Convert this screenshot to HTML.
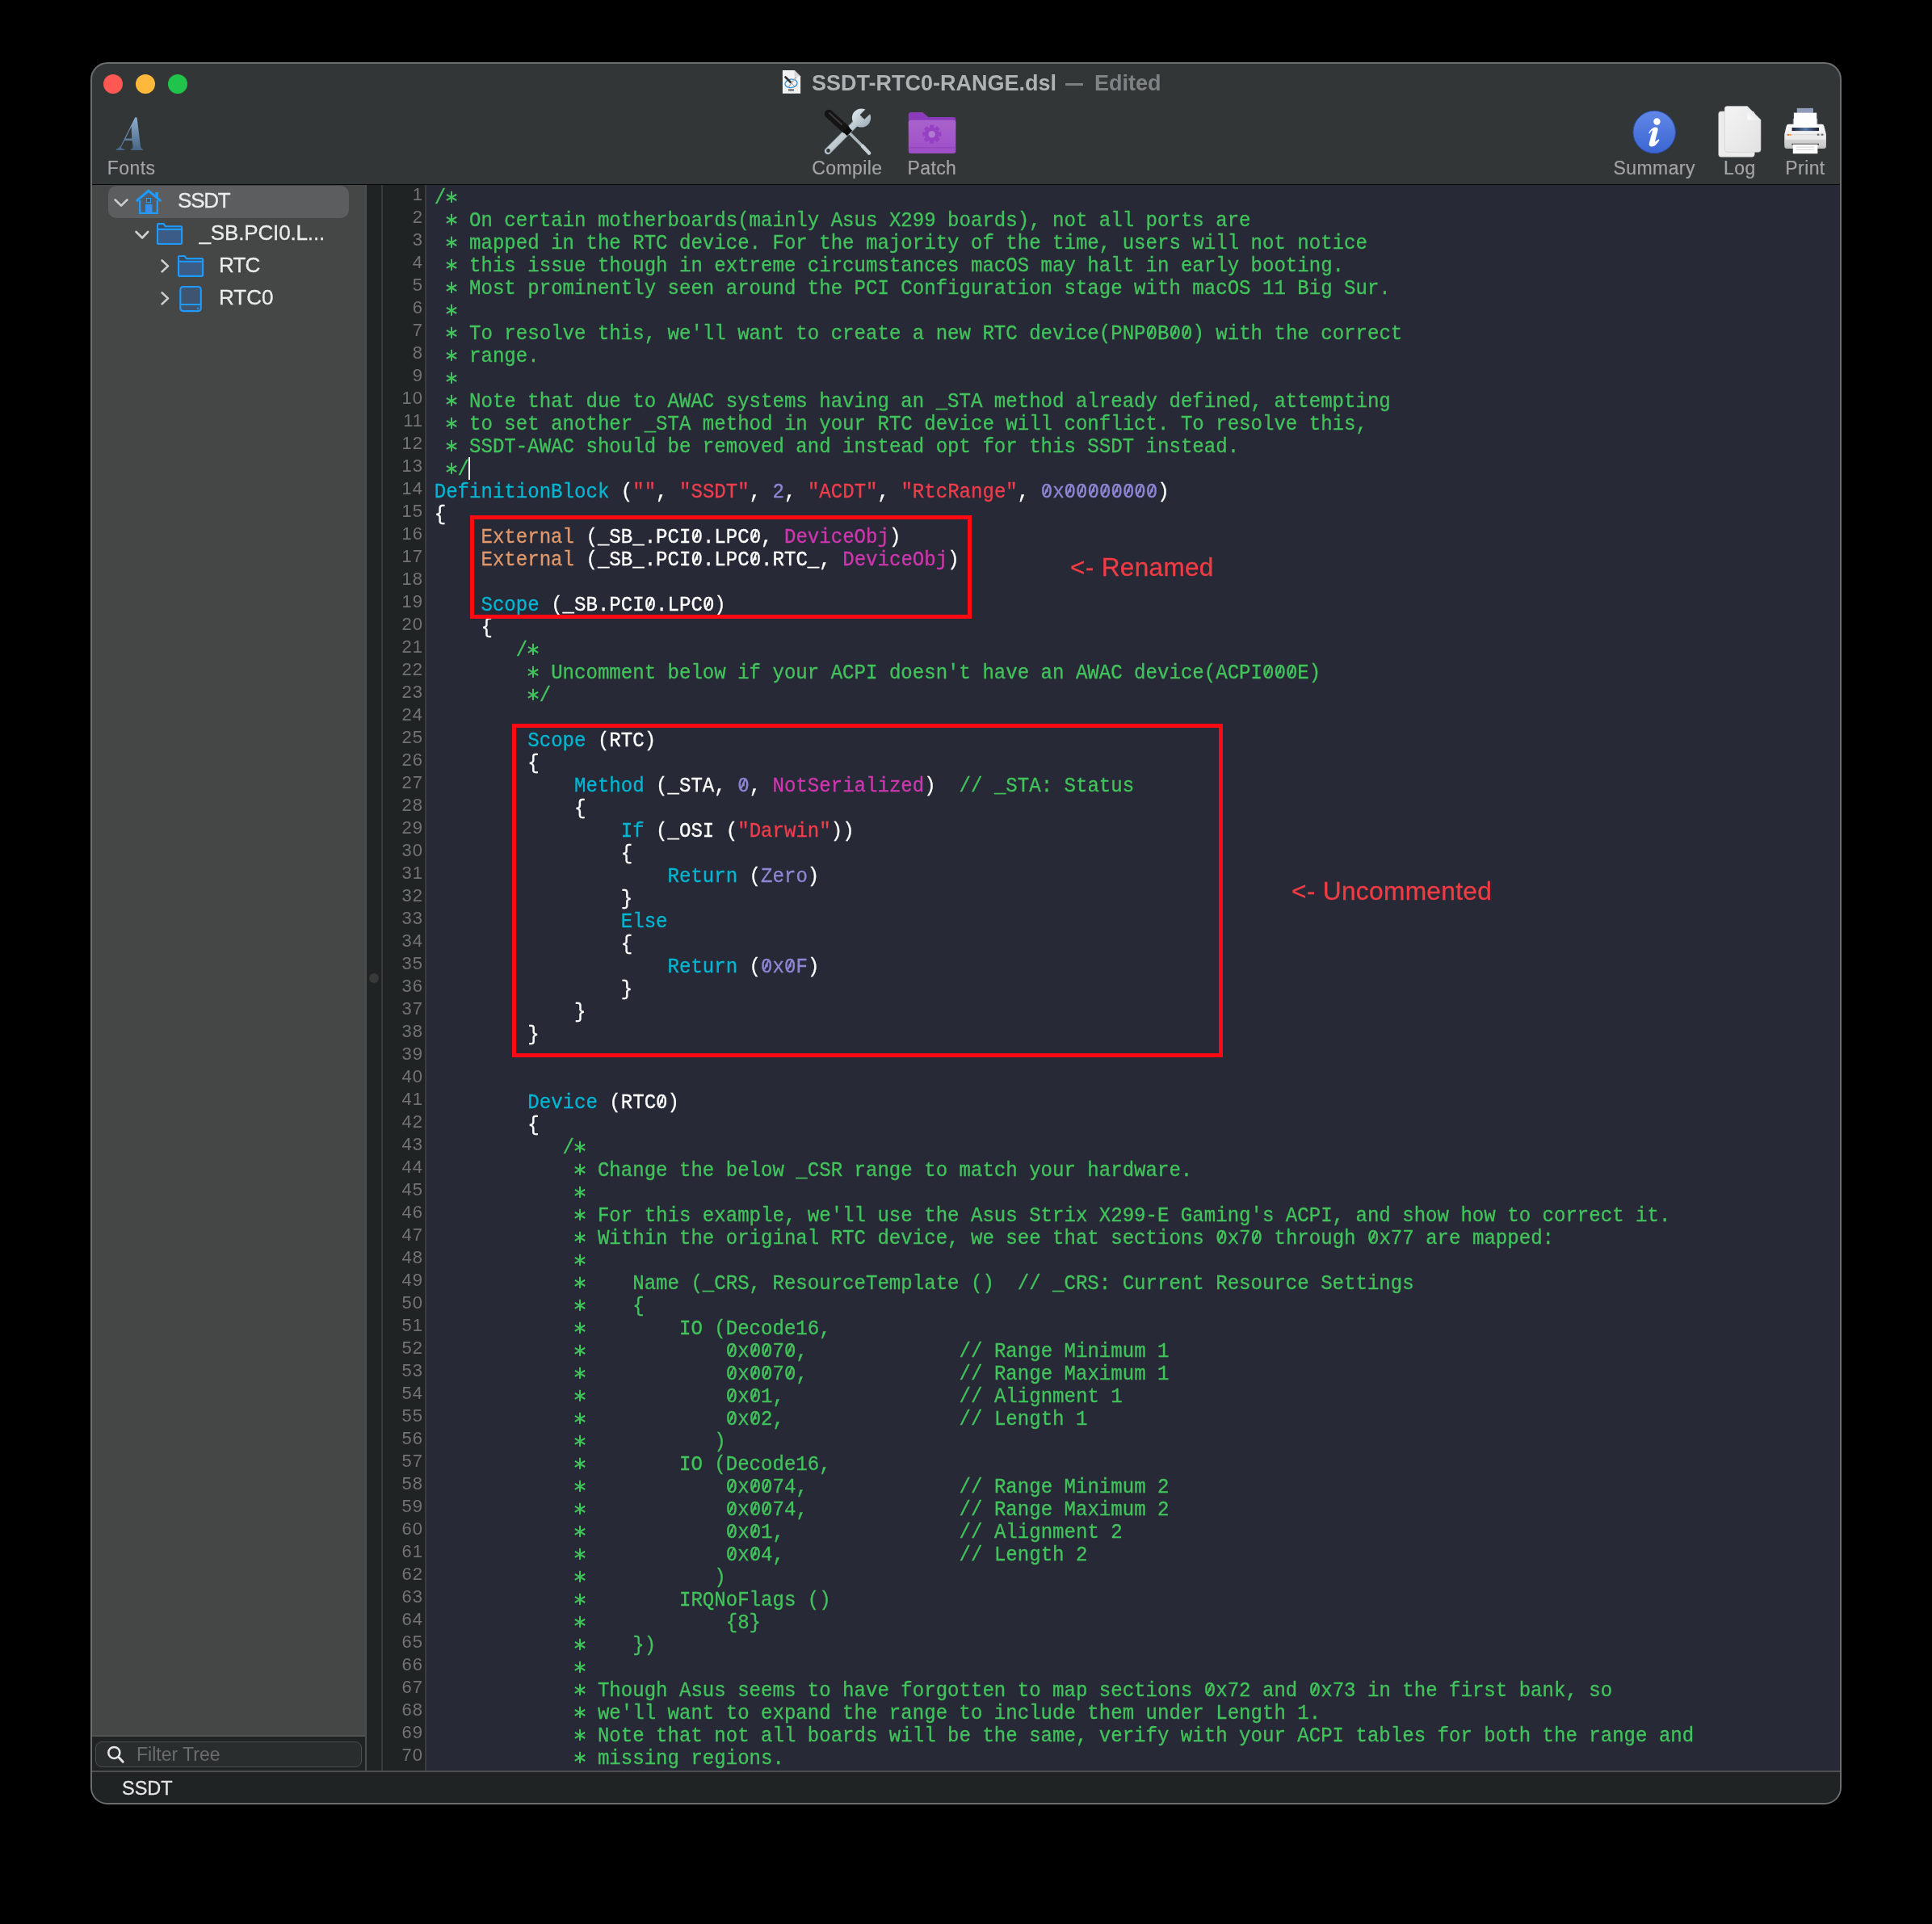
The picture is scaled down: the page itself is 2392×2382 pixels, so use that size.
<!DOCTYPE html>
<html><head><meta charset="utf-8"><title>MaciASL</title><style>
html,body{margin:0;padding:0;background:#000;width:2392px;height:2382px;overflow:hidden;position:relative}
*{box-sizing:border-box}
.a{position:absolute}
#win{position:absolute;left:112px;top:77px;width:2168px;height:2157px;border:2px solid #6c6e6e;border-radius:21px;background:#333637;overflow:hidden}
#c{position:absolute;left:-114px;top:-79px;width:2392px;height:2382px}
.sans{font-family:"Liberation Sans",sans-serif}
#code{position:absolute;left:537.73px;top:0;font-family:"Liberation Mono",monospace;font-size:24.072px;line-height:28px;color:#fff;white-space:pre}
#code .ln{height:28px;transform-origin:0 20px;transform:scaleY(1.085);-webkit-text-stroke:0.3px currentColor}
.c{color:#42c35c}.k{color:#00b6d2}.s{color:#f03d4c}.n{color:#8f86d6}.e{color:#e2986a}.m{color:#cf36b0}
#nums{position:absolute;left:474px;width:50px;text-align:right;font-family:"Liberation Sans",sans-serif;font-size:22px;letter-spacing:1px;line-height:28px;color:#727474}
#nums div{height:28px}
.tl{font-family:"Liberation Sans",sans-serif;font-size:23px;-webkit-text-stroke:0.2px currentColor;letter-spacing:0.4px;width:200px;text-align:center;color:#a2a4a5;white-space:nowrap;line-height:1}
.sb{font-family:"Liberation Sans",sans-serif;font-size:26px;-webkit-text-stroke:0.3px currentColor;color:#ececec;white-space:nowrap;line-height:1}

.ast{display:inline-block;width:14.4457px;height:28px;position:relative;vertical-align:top;font-style:normal;background:linear-gradient(currentColor,currentColor) no-repeat 6.22px 6.27px/2.1px 13.36px}
.ast::before,.ast::after{content:"";position:absolute;left:6.22px;top:6.0px;width:2.1px;height:13.9px;background:currentColor}
.ast::before{transform:rotate(62deg)}
.ast::after{transform:rotate(-62deg)}

/* grayscale-aa */ #c{will-change:transform}

.z{font-style:normal;position:relative}
.z::after{content:"";position:absolute;left:5.85px;top:5.75px;width:2.3px;height:10.9px;background:currentColor;transform:rotate(25.5deg)}

</style></head><body>
<div id="win"><div id="c">
<!-- toolbar black line -->
<div class="a" style="left:114px;top:228px;width:2164px;height:1.4px;background:#050606"></div>
<!-- traffic lights -->
<div class="a" style="left:128px;top:92px;width:24px;height:24px;border-radius:50%;background:#ff5752"></div>
<div class="a" style="left:168px;top:92px;width:24px;height:24px;border-radius:50%;background:#feb83c"></div>
<div class="a" style="left:208px;top:92px;width:24px;height:24px;border-radius:50%;background:#20c44a"></div>
<!-- title -->
<div class="a sans" style="left:1005px;top:87px;font-weight:bold;font-size:27px;color:#b0b3b4;white-space:nowrap;line-height:32px">SSDT-RTC0-RANGE.dsl</div>
<div class="a" style="left:1319px;top:102.6px;width:22px;height:3.5px;background:#7c8081"></div>
<div class="a sans" style="left:1355px;top:87px;font-weight:bold;font-size:27px;color:#808384;white-space:nowrap;line-height:32px">Edited</div>
<!-- sidebar -->
<div class="a" style="left:114px;top:229.3px;width:340px;height:1920px;background:#454646"></div>
<div class="a" style="left:452px;top:229.3px;width:2px;height:1963px;background:#4c4d4d"></div>
<div class="a" style="left:114px;top:2148px;width:338px;height:2px;background:#525353"></div>
<div class="a" style="left:114px;top:2150px;width:338px;height:42px;background:#202324"></div>
<div class="a" style="left:118px;top:2156px;width:330px;height:32px;border-radius:8px;background:#2a2d2e;border:1px solid #4a4c4d"></div>
<div class="a sans" style="left:169px;top:2160px;font-size:23px;color:#6a6c6d;line-height:24px">Filter Tree</div>
<div class="a" style="left:134px;top:230px;width:298px;height:40px;border-radius:10px;background:#5c5d5f"></div>
<div class="a sb" style="left:220px;top:235px;letter-spacing:-1.2px">SSDT</div>
<div class="a sb" style="left:246.5px;top:275px;letter-spacing:-0.15px">_SB.PCI0.L...</div>
<div class="a sb" style="left:271px;top:314.5px;letter-spacing:-0.8px">RTC</div>
<div class="a sb" style="left:271px;top:355px">RTC0</div>
<!-- divider -->
<div class="a" style="left:454px;top:229.3px;width:18px;height:1963px;background:#202324"></div>
<div class="a" style="left:457px;top:1205px;width:12px;height:12px;border-radius:50%;background:#383939"></div>
<div class="a" style="left:472px;top:229.3px;width:2px;height:1963px;background:#383a3a"></div>
<!-- gutter -->
<div class="a" style="left:474px;top:229.3px;width:52px;height:1963px;background:#202324"></div>
<div class="a" style="left:526px;top:229.3px;width:2px;height:1963px;background:#3b3d3e"></div>
<!-- editor -->
<div class="a" style="left:528px;top:229.3px;width:1750px;height:1963px;background:#272a36"></div>
<div class="a" style="left:0;top:229.3px;width:2392px;height:1962.7px;overflow:hidden">
  <div id="nums" style="top:-2.6px"><div>1</div>
<div>2</div>
<div>3</div>
<div>4</div>
<div>5</div>
<div>6</div>
<div>7</div>
<div>8</div>
<div>9</div>
<div>10</div>
<div>11</div>
<div>12</div>
<div>13</div>
<div>14</div>
<div>15</div>
<div>16</div>
<div>17</div>
<div>18</div>
<div>19</div>
<div>20</div>
<div>21</div>
<div>22</div>
<div>23</div>
<div>24</div>
<div>25</div>
<div>26</div>
<div>27</div>
<div>28</div>
<div>29</div>
<div>30</div>
<div>31</div>
<div>32</div>
<div>33</div>
<div>34</div>
<div>35</div>
<div>36</div>
<div>37</div>
<div>38</div>
<div>39</div>
<div>40</div>
<div>41</div>
<div>42</div>
<div>43</div>
<div>44</div>
<div>45</div>
<div>46</div>
<div>47</div>
<div>48</div>
<div>49</div>
<div>50</div>
<div>51</div>
<div>52</div>
<div>53</div>
<div>54</div>
<div>55</div>
<div>56</div>
<div>57</div>
<div>58</div>
<div>59</div>
<div>60</div>
<div>61</div>
<div>62</div>
<div>63</div>
<div>64</div>
<div>65</div>
<div>66</div>
<div>67</div>
<div>68</div>
<div>69</div>
<div>70</div>
<div>71</div></div>
  <div id="code" style="top:2.7px"><div class="ln"><span class="c">/<i class="ast"></i></span></div><div class="ln"><span class="c"> <i class="ast"></i> On certain motherboards(mainly Asus X299 boards), not all ports are</span></div><div class="ln"><span class="c"> <i class="ast"></i> mapped in the RTC device. For the majority of the time, users will not notice</span></div><div class="ln"><span class="c"> <i class="ast"></i> this issue though in extreme circumstances macOS may halt in early booting.</span></div><div class="ln"><span class="c"> <i class="ast"></i> Most prominently seen around the PCI Configuration stage with macOS 11 Big Sur.</span></div><div class="ln"><span class="c"> <i class="ast"></i></span></div><div class="ln"><span class="c"> <i class="ast"></i> To resolve this, we'll want to create a new RTC device(PNP<i class="z">0</i>B<i class="z">0</i><i class="z">0</i>) with the correct</span></div><div class="ln"><span class="c"> <i class="ast"></i> range.</span></div><div class="ln"><span class="c"> <i class="ast"></i></span></div><div class="ln"><span class="c"> <i class="ast"></i> Note that due to AWAC systems having an _STA method already defined, attempting</span></div><div class="ln"><span class="c"> <i class="ast"></i> to set another _STA method in your RTC device will conflict. To resolve this,</span></div><div class="ln"><span class="c"> <i class="ast"></i> SSDT-AWAC should be removed and instead opt for this SSDT instead.</span></div><div class="ln"><span class="c"> <i class="ast"></i>/</span></div><div class="ln"><span class="k">DefinitionBlock</span> (<span class="s">""</span>, <span class="s">"SSDT"</span>, <span class="n">2</span>, <span class="s">"ACDT"</span>, <span class="s">"RtcRange"</span>, <span class="n"><i class="z">0</i>x<i class="z">0</i><i class="z">0</i><i class="z">0</i><i class="z">0</i><i class="z">0</i><i class="z">0</i><i class="z">0</i><i class="z">0</i></span>)</div><div class="ln">{</div><div class="ln">    <span class="e">External</span> (_SB_.PCI<i class="z">0</i>.LPC<i class="z">0</i>, <span class="m">DeviceObj</span>)</div><div class="ln">    <span class="e">External</span> (_SB_.PCI<i class="z">0</i>.LPC<i class="z">0</i>.RTC_, <span class="m">DeviceObj</span>)</div><div class="ln"></div><div class="ln">    <span class="k">Scope</span> (_SB.PCI<i class="z">0</i>.LPC<i class="z">0</i>)</div><div class="ln">    {</div><div class="ln"><span class="c">       /<i class="ast"></i></span></div><div class="ln"><span class="c">        <i class="ast"></i> Uncomment below if your ACPI doesn't have an AWAC device(ACPI<i class="z">0</i><i class="z">0</i><i class="z">0</i>E)</span></div><div class="ln"><span class="c">        <i class="ast"></i>/</span></div><div class="ln"></div><div class="ln">        <span class="k">Scope</span> (RTC)</div><div class="ln">        {</div><div class="ln">            <span class="k">Method</span> (_STA, <span class="n"><i class="z">0</i></span>, <span class="m">NotSerialized</span>)  <span class="c">// _STA: Status</span></div><div class="ln">            {</div><div class="ln">                <span class="k">If</span> (_OSI (<span class="s">"Darwin"</span>))</div><div class="ln">                {</div><div class="ln">                    <span class="k">Return</span> (<span class="n">Zero</span>)</div><div class="ln">                }</div><div class="ln">                <span class="k">Else</span></div><div class="ln">                {</div><div class="ln">                    <span class="k">Return</span> (<span class="n"><i class="z">0</i>x<i class="z">0</i>F</span>)</div><div class="ln">                }</div><div class="ln">            }</div><div class="ln">        }</div><div class="ln"></div><div class="ln"></div><div class="ln">        <span class="k">Device</span> (RTC<i class="z">0</i>)</div><div class="ln">        {</div><div class="ln"><span class="c">           /<i class="ast"></i></span></div><div class="ln"><span class="c">            <i class="ast"></i> Change the below _CSR range to match your hardware.</span></div><div class="ln"><span class="c">            <i class="ast"></i></span></div><div class="ln"><span class="c">            <i class="ast"></i> For this example, we'll use the Asus Strix X299-E Gaming's ACPI, and show how to correct it.</span></div><div class="ln"><span class="c">            <i class="ast"></i> Within the original RTC device, we see that sections <i class="z">0</i>x7<i class="z">0</i> through <i class="z">0</i>x77 are mapped:</span></div><div class="ln"><span class="c">            <i class="ast"></i></span></div><div class="ln"><span class="c">            <i class="ast"></i>    Name (_CRS, ResourceTemplate ()  // _CRS: Current Resource Settings</span></div><div class="ln"><span class="c">            <i class="ast"></i>    {</span></div><div class="ln"><span class="c">            <i class="ast"></i>        IO (Decode16,</span></div><div class="ln"><span class="c">            <i class="ast"></i>            <i class="z">0</i>x<i class="z">0</i><i class="z">0</i>7<i class="z">0</i>,             // Range Minimum 1</span></div><div class="ln"><span class="c">            <i class="ast"></i>            <i class="z">0</i>x<i class="z">0</i><i class="z">0</i>7<i class="z">0</i>,             // Range Maximum 1</span></div><div class="ln"><span class="c">            <i class="ast"></i>            <i class="z">0</i>x<i class="z">0</i>1,               // Alignment 1</span></div><div class="ln"><span class="c">            <i class="ast"></i>            <i class="z">0</i>x<i class="z">0</i>2,               // Length 1</span></div><div class="ln"><span class="c">            <i class="ast"></i>           )</span></div><div class="ln"><span class="c">            <i class="ast"></i>        IO (Decode16,</span></div><div class="ln"><span class="c">            <i class="ast"></i>            <i class="z">0</i>x<i class="z">0</i><i class="z">0</i>74,             // Range Minimum 2</span></div><div class="ln"><span class="c">            <i class="ast"></i>            <i class="z">0</i>x<i class="z">0</i><i class="z">0</i>74,             // Range Maximum 2</span></div><div class="ln"><span class="c">            <i class="ast"></i>            <i class="z">0</i>x<i class="z">0</i>1,               // Alignment 2</span></div><div class="ln"><span class="c">            <i class="ast"></i>            <i class="z">0</i>x<i class="z">0</i>4,               // Length 2</span></div><div class="ln"><span class="c">            <i class="ast"></i>           )</span></div><div class="ln"><span class="c">            <i class="ast"></i>        IRQNoFlags ()</span></div><div class="ln"><span class="c">            <i class="ast"></i>            {8}</span></div><div class="ln"><span class="c">            <i class="ast"></i>    })</span></div><div class="ln"><span class="c">            <i class="ast"></i></span></div><div class="ln"><span class="c">            <i class="ast"></i> Though Asus seems to have forgotten to map sections <i class="z">0</i>x72 and <i class="z">0</i>x73 in the first bank, so</span></div><div class="ln"><span class="c">            <i class="ast"></i> we'll want to expand the range to include them under Length 1.</span></div><div class="ln"><span class="c">            <i class="ast"></i> Note that not all boards will be the same, verify with your ACPI tables for both the range and</span></div><div class="ln"><span class="c">            <i class="ast"></i> missing regions.</span></div><div class="ln"><span class="c">            <i class="ast"></i>/</span></div></div>
</div>
<!-- cursor -->
<div class="a" style="left:580px;top:566px;width:2px;height:28px;background:#fff"></div>
<!-- red boxes -->
<div class="a" style="left:582px;top:638px;width:621px;height:128px;border:5.3px solid #ff0a12"></div>
<div class="a" style="left:634px;top:896px;width:880px;height:413px;border:5.3px solid #ff0a12"></div>
<div class="a sans" style="left:1325px;top:682px;font-size:31.5px;letter-spacing:0.35px;-webkit-text-stroke:0.3px currentColor;color:#f23c44;white-space:nowrap;line-height:40px">&lt;- Renamed</div>
<div class="a sans" style="left:1599px;top:1083px;letter-spacing:0.3px;-webkit-text-stroke:0.3px currentColor;font-size:31.7px;color:#f23c44;white-space:nowrap;line-height:40px">&lt;- Uncommented</div>
<!-- status bar -->
<div class="a" style="left:114px;top:2192px;width:2164px;height:2px;background:#4f5151"></div>
<div class="a" style="left:114px;top:2194px;width:2164px;height:40px;background:#202324"></div>
<div class="a sans" style="left:151px;top:2200px;font-size:23.5px;-webkit-text-stroke:0.3px currentColor;color:#e6e6e6;line-height:28px">SSDT</div>

<!-- ICONS: full-page svg -->
<svg class="a" style="left:0;top:0" width="2392" height="400" viewBox="0 0 2392 400">
<defs>
<linearGradient id="gA" x1="0" y1="0" x2="0" y2="1"><stop offset="0" stop-color="#8eaccb"/><stop offset="1" stop-color="#476686"/></linearGradient>
<linearGradient id="gInfo" x1="0" y1="0" x2="0" y2="1"><stop offset="0" stop-color="#6188e8"/><stop offset="1" stop-color="#3b66d2"/></linearGradient>
<linearGradient id="gPage" x1="0" y1="0" x2="1" y2="1"><stop offset="0" stop-color="#f4f4f4"/><stop offset="1" stop-color="#e2e2e2"/></linearGradient>
<linearGradient id="gFold" x1="0" y1="1" x2="1" y2="0"><stop offset="0" stop-color="#ffffff"/><stop offset="1" stop-color="#cfcfcf"/></linearGradient>
<linearGradient id="gPurp" x1="0" y1="0" x2="0" y2="1"><stop offset="0" stop-color="#a862cc"/><stop offset="1" stop-color="#9e4fc8"/></linearGradient>
<linearGradient id="gSilver" x1="0" y1="0" x2="1" y2="1"><stop offset="0" stop-color="#e4eef4"/><stop offset="1" stop-color="#9aa7b0"/></linearGradient>
<linearGradient id="gBody" x1="0" y1="0" x2="0" y2="1"><stop offset="0" stop-color="#fafafa"/><stop offset="0.6" stop-color="#e8e8e8"/><stop offset="1" stop-color="#bdbdbd"/></linearGradient>
<linearGradient id="gSlot" x1="0" y1="0" x2="1" y2="0"><stop offset="0" stop-color="#1a2233"/><stop offset="0.5" stop-color="#5a78a8"/><stop offset="1" stop-color="#1a2233"/></linearGradient>
</defs>
<!-- title doc icon -->
<path d="M968.9 86.9 H983.6 L991.1 94.4 V115.8 H968.9 Z" fill="#f2f2f2"/>
<path d="M983.6 86.9 V94.4 H991.1 Z" fill="#d4d4d4"/>
<ellipse cx="979.5" cy="103.3" rx="7.6" ry="5.2" fill="none" stroke="#2f8fd6" stroke-width="1.3" transform="rotate(-8 979.5 103.3)"/>
<line x1="972.5" y1="95.5" x2="979" y2="102" stroke="#333" stroke-width="2.8" stroke-linecap="round"/>
<line x1="979" y1="102" x2="984" y2="107" stroke="#999" stroke-width="1"/>
<line x1="976" y1="108" x2="986" y2="95" stroke="#aaa" stroke-width="1.3"/>
<rect x="976" y="110" width="7" height="3" fill="#888"/>
<!-- Fonts A -->
<path fill-rule="evenodd" fill="url(#gA)" d="M167.3 145.3 L169.6 145.6 L173.9 180.5 Q174.5 184.3 177 184.7 L177 186.1 L162 186.1 L162 184.7 Q164.9 184.2 164.5 180.5 L163.5 173.9 L154.3 173.9 L150.6 181 Q149 184.3 154.2 184.7 L154.2 186.1 L143.8 186.1 L143.8 184.7 Q146.9 184.2 149.6 180.3 Z M162.6 156.8 L163.2 171.6 L155.5 171.6 Z"/>
<!-- Compile: wrench -->
<mask id="mW" maskUnits="userSpaceOnUse" x="1000" y="120" width="100" height="100">
<rect x="1000" y="120" width="100" height="100" fill="#fff"/>
<path d="M1066 146 L1072 140 L1074 130 L1084 140 L1074 142 Z" fill="#000"/>
<rect x="-4" y="-16" width="8" height="16" fill="#000" transform="translate(1067.5 145) rotate(45)"/>
<circle cx="1025.5" cy="186.5" r="2.4" fill="#000"/>
</mask>
<g mask="url(#mW)">
<line x1="1025" y1="187" x2="1060" y2="152" stroke="#93a0a9" stroke-width="8.6" stroke-linecap="round"/>
<line x1="1025" y1="187" x2="1060" y2="152" stroke="url(#gSilver)" stroke-width="6.8" stroke-linecap="round"/>
<circle cx="1066.5" cy="146" r="11.6" fill="url(#gSilver)"/>
</g>
<!-- Compile: screwdriver -->
<line x1="1051" y1="164" x2="1074" y2="187" stroke="#aeb8bf" stroke-width="3.6"/>
<line x1="1068" y1="181" x2="1076" y2="189.5" stroke="#c8d0d5" stroke-width="4.6" stroke-linecap="round"/>
<line x1="1026" y1="141" x2="1047" y2="160" stroke="#141414" stroke-width="10.5" stroke-linecap="round"/>
<line x1="1047" y1="160" x2="1052" y2="165" stroke="#0c0c0c" stroke-width="9"/>
<line x1="1027" y1="140" x2="1042" y2="154" stroke="#4a4a4a" stroke-width="2" stroke-linecap="round" opacity="0.7"/>
<!-- Patch folder -->
<path d="M1124.8 142 Q1124.8 139 1127.8 139 H1142.5 L1149.5 145 H1180.3 Q1183.3 145 1183.3 148 V160 H1124.8 Z" fill="#8a3cba"/>
<rect x="1124.8" y="148.8" width="58.5" height="41.3" rx="3" fill="url(#gPurp)"/>
<rect x="1124.8" y="182" width="58.5" height="1.6" fill="#8c44b4" opacity="0.6"/>
<g transform="translate(1153.7 166.2)" fill="#9640c4">
<circle r="8.6"/>
<rect x="-2.6" y="-11.6" width="5.2" height="23.2" rx="1"/>
<rect x="-2.6" y="-11.6" width="5.2" height="23.2" rx="1" transform="rotate(45)"/>
<rect x="-2.6" y="-11.6" width="5.2" height="23.2" rx="1" transform="rotate(90)"/>
<rect x="-2.6" y="-11.6" width="5.2" height="23.2" rx="1" transform="rotate(135)"/>
<circle r="4.2" fill="#b07ad0"/>
</g>
<!-- Summary info -->
<circle cx="2048.2" cy="163.5" r="26.2" fill="url(#gInfo)" stroke="#2c56b6" stroke-width="1"/>
<circle cx="2051.4" cy="150.55" r="4.2" fill="#fff"/>
<path d="M2041.2 164.4 C2043.5 160.5 2046.5 157.8 2049.5 157.6 Q2053.5 157.5 2052.5 161.5 L2048.9 175.5 L2053.6 172.3 L2054.5 173.6 Q2049.5 181.8 2045.2 181.6 Q2040.8 181.3 2042 176.5 L2045.8 162.2 Q2046 160.8 2045 161.6 L2042.2 165.4 Z" fill="#fff"/>
<!-- Log pages -->
<rect x="2127.8" y="137.9" width="44.4" height="56.3" rx="3" fill="#ececec"/>
<rect x="2127.8" y="137.9" width="44.4" height="56.3" rx="3" fill="none" stroke="#d0d0d0" stroke-width="0.6"/>
<path d="M2138.3 131.6 H2163.2 L2180 148.4 V185.3 Q2180 188.3 2177 188.3 H2138.3 Q2135.3 188.3 2135.3 185.3 V134.6 Q2135.3 131.6 2138.3 131.6 Z" fill="url(#gPage)" stroke="#c8c8c8" stroke-width="0.6"/>
<path d="M2163.2 131.6 V145.4 Q2163.2 148.4 2166.2 148.4 H2180 Z" fill="url(#gFold)"/>
<!-- Printer -->
<rect x="2224.8" y="133.9" width="20.2" height="6" fill="#8f9bb8"/>
<rect x="2219.8" y="147" width="30.5" height="12" fill="#8d9ab6"/>
<path d="M2214.6 153.7 H2255.6 Q2257.9 153.7 2258.4 156 L2260.9 166 V181 Q2260.9 184 2257.9 184 H2212.3 Q2209.3 184 2209.3 181 V166 L2211.8 156 Q2212.3 153.7 2214.6 153.7 Z" fill="url(#gBody)"/>
<rect x="2209.3" y="173" width="51.6" height="4.8" fill="#c9c9c9" opacity="0.55"/>
<rect x="2220.9" y="139.6" width="28.4" height="18.5" fill="#fdfdfd"/>
<rect x="2218.6" y="158" width="33.4" height="4.3" fill="url(#gSlot)"/>
<rect x="2218.6" y="162.3" width="33.4" height="1.5" fill="#f2f2f2"/>
<rect x="2209.8" y="166" width="50.6" height="1.2" fill="#dcdcdc"/>
<rect x="2213" y="165.9" width="2.2" height="2" fill="#f0663a"/>
<rect x="2215.6" y="165.9" width="2.2" height="2" fill="#f4a83a"/>
<rect x="2249.8" y="165.6" width="2.6" height="2.2" fill="#6a6a6a"/>
<rect x="2254.8" y="165.6" width="2.6" height="2.2" fill="#6a6a6a"/>
<rect x="2218.4" y="177.8" width="33.6" height="1.6" fill="#2a2a2a"/>
<rect x="2219.8" y="178.6" width="30.6" height="11.6" fill="#fdfdfd"/>
<rect x="2224" y="181.6" width="22" height="0.9" fill="#cfcfcf"/>
<rect x="2224" y="184.8" width="22" height="0.9" fill="#cfcfcf"/>
<!-- Sidebar icons -->
<g fill="none" stroke="#cfcfcf" stroke-width="2.6" stroke-linecap="round" stroke-linejoin="round">
<polyline points="142.6,247.4 150,254.6 157.4,247.4"/>
<polyline points="168.5,287 176.1,294.5 183.2,287"/>
<polyline points="200.6,322.5 208,329.4 200.6,336.4"/>
<polyline points="200.6,362.4 208,369.4 200.6,376.4"/>
</g>
<!-- house -->
<path d="M173.2 248 L183.9 238 L194.6 248 V263.8 H173.2 Z" fill="#525b66"/>
<path d="M169.8 248.2 L183.9 236.3 L198.4 248.2" fill="none" stroke="#1f9bff" stroke-width="3" stroke-linecap="round" stroke-linejoin="miter"/>
<path d="M173.2 248 V263.8 H194.8 V248" fill="none" stroke="#1f9bff" stroke-width="2.3"/>
<rect x="192.3" y="238" width="3.7" height="7" fill="#1f9bff"/>
<rect x="181.5" y="245.6" width="5" height="5" fill="#4a4a48" stroke="#1f9bff" stroke-width="1.3"/>
<rect x="180.6" y="253.6" width="7.3" height="10.6" fill="#3b8de6" stroke="#1f9bff" stroke-width="1.1"/>
<!-- folder row2 -->
<path d="M196 277.1 H202.6 L204.8 280.2 H225 V284 H195 V278.1 Z" fill="#3a4a5c"/>
<rect x="195" y="284" width="30.1" height="18" fill="#3a5c87"/>
<path d="M197 277.1 H202.6 L204.8 280.2 H224 Q225.1 280.2 225.1 281.3 V300.9 Q225.1 302 224 302 H196.1 Q195 302 195 300.9 V278.2 Q195 277.1 196.1 277.1 Z M195 283.9 H225.1" fill="none" stroke="#1f9bff" stroke-width="2.1"/>
<!-- folder row3 -->
<path d="M222 317 H228.6 L230.8 320.1 H251 V323.9 H221 V318 Z" fill="#3a4a5c"/>
<rect x="221" y="323.9" width="30.1" height="18" fill="#3a5c87"/>
<path d="M223 317 H228.6 L230.8 320.1 H250 Q251.1 320.1 251.1 321.2 V340.8 Q251.1 341.9 250 341.9 H222.1 Q221 341.9 221 340.8 V318.1 Q221 317 222.1 317 Z M221 323.8 H251.1" fill="none" stroke="#1f9bff" stroke-width="2.1"/>
<!-- drive row4 -->
<path d="M227 355 H245 Q248.8 355 248.8 359 V381.3 Q248.8 385.1 245 385.1 H227.2 Q223.3 385.1 223.3 381.3 V359 Q223.3 355 227 355 Z" fill="#3d5570" stroke="#1f9bff" stroke-width="2.1"/>
<line x1="223.5" y1="377" x2="248.6" y2="377" stroke="#1f9bff" stroke-width="2"/>
<rect x="243.9" y="380.7" width="2" height="2" fill="#1f9bff"/>
</svg>
<!-- search icon -->
<svg class="a" style="left:116px;top:2150px" width="60" height="45" viewBox="116 2150 60 45">
<circle cx="141.3" cy="2169.9" r="7" fill="none" stroke="#e6e6e6" stroke-width="2.5"/>
<line x1="146.6" y1="2175.3" x2="152.2" y2="2181.2" stroke="#e6e6e6" stroke-width="3" stroke-linecap="round"/>
</svg>

<!-- toolbar labels -->
<div class="a tl" style="left:62.6px;top:197px">Fonts</div>
<div class="a tl" style="left:948.9px;top:197px">Compile</div>
<div class="a tl" style="left:1053.9px;top:197px">Patch</div>
<div class="a tl" style="left:1948.2px;top:197px">Summary</div>
<div class="a tl" style="left:2053.9px;top:197px">Log</div>
<div class="a tl" style="left:2135px;top:197px">Print</div>
</div></div>

</body></html>
